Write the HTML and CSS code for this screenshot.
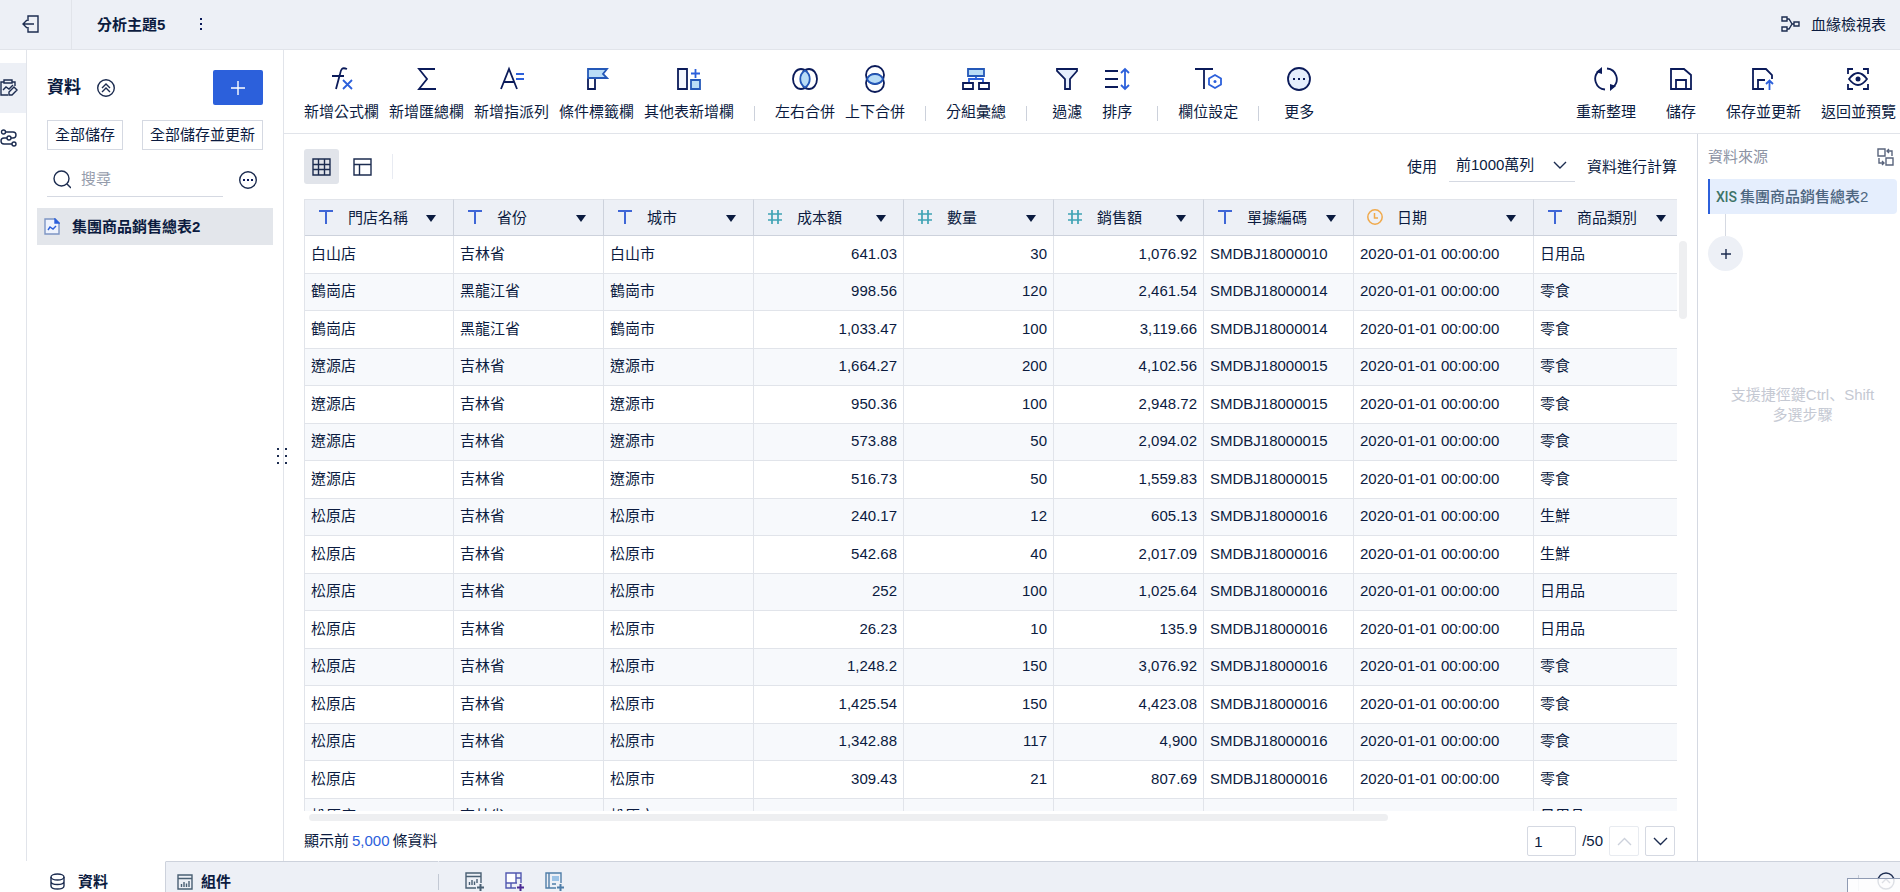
FILE: index.html
```html
<!DOCTYPE html>
<html lang="zh-Hant">
<head>
<meta charset="utf-8">
<title>分析主題5</title>
<link rel="stylesheet" href="styles.css">
</head>
<body>
<svg class="defs" aria-hidden="true">
  <symbol id="i-text" viewBox="0 0 16 16"><path d="M1 2h14M8 2v13" stroke="#3f66d6" stroke-width="2" fill="none"/></symbol>
  <symbol id="i-num" viewBox="0 0 16 16"><path d="M1 5h14M1 11h14M5 1v14M11 1v14" stroke="#3fa3b5" stroke-width="1.700" fill="none"/></symbol>
  <symbol id="i-clock" viewBox="0 0 16 16"><circle cx="8" cy="8" r="7.2" stroke="#f0a94b" stroke-width="1.5" fill="none"/><path d="M7.500 4v5H11" stroke="#f0a94b" stroke-width="1.5" fill="none"/></symbol>
  <symbol id="i-caret" viewBox="0 0 10 8"><path d="M0 1h10L5 8z" fill="#0b1b3f"/></symbol>
</svg>
<div class="app">
  <header class="topbar">
    <button class="exit" aria-label="退出"><svg width="18" height="18" viewBox="0 0 18 18"><path d="M6 6V1h10v16H6v-5M12 9H1M5 5L1 9l4 4"/></svg></button>
    <h1 class="title">分析主題5</h1>
    <button class="dots" aria-label="更多"><svg width="4" height="14" viewBox="0 0 4 14"><path class="solid" d="M1 1h2v2H1zM1 6h2v2H1zM1 11h2v2H1z"/></svg></button>
    <button class="lineage"><svg width="19" height="16" viewBox="0 0 19 16"><path d="M1 1h5v4H1zM1 11h5v4H1zM13 6h5v4h-5zM6 3h2l3 5-3 5H6M11 8h2"/></svg>血緣檢視表</button>
  </header>
  <div class="body">
    <nav class="rail">
      <button class="rail-item active" aria-label="資料編輯"><svg width="20" height="18" viewBox="0 0 20 18"><path d="M8 16H1V3h3M15 7V3h-3M4 1h8v3H4zM3 11l3-3 3 2 4-4M9 13l5-5 3 3-5 5H9z"/></svg></button>
      <button class="rail-item" aria-label="流程"><svg width="20" height="18" viewBox="0 0 20 18"><circle cx="3.500" cy="3" r="2"/><circle cx="9" cy="9" r="2"/><circle cx="14" cy="15" r="2"/><path d="M6 3h7a3 3 0 0 1 0 6h-2M7 9H4a3 3 0 0 0 0 6h8"/></svg></button>
    </nav>
    <aside class="side">
      <div class="side-head">
        <h2>資料</h2>
        <button aria-label="收合"><svg width="18" height="18" viewBox="0 0 18 18"><circle cx="9" cy="9" r="8.300"/><path d="M5 9l4-4 4 4M5 13l4-4 4 4"/></svg></button>
        <button class="add" aria-label="新增"><svg width="14" height="14" viewBox="0 0 14 14"><path d="M7 0v14M0 7h14"/></svg></button>
      </div>
      <div class="side-actions"><button>全部儲存</button><button>全部儲存並更新</button></div>
      <div class="side-search">
        <label class="search"><svg width="18" height="19" viewBox="0 0 18 19"><circle cx="8.500" cy="8.500" r="7.500"/><path d="M14 14l4 4"/></svg><input type="text" placeholder="搜尋" aria-label="搜尋"></label>
        <button aria-label="選項"><svg width="18" height="18" viewBox="0 0 18 18"><circle cx="9" cy="9" r="8.300"/><path class="solid" d="M4 8h2v2H4zM8 8h2v2H8zM12 8h2v2h-2z"/></svg></button>
      </div>
      <a class="side-item" href="#"><svg width="16" height="17" viewBox="0 0 16 17"><path class="page" d="M1 1h10l4 4v11H1z"/><path d="M11 1v4h4z" class="fold"/><path d="M4 12l2-3 3 2 3-3"/></svg>集團商品銷售總表2</a>
      <div class="grip"><i></i><i></i><i></i><i></i><i></i><i></i></div>
    </aside>
    <div class="work">
      <div class="tools">
        <button class="tool"><svg width="24" height="26" viewBox="0 0 24 26"><path d="M17 3c-5-2-6 0-7 5L6 23M2 10h12"/><path class="b" d="M13 14l9 9M22 14l-9 9"/></svg>新增公式欄</button>
        <button class="tool"><svg width="24" height="26" viewBox="0 0 24 26"><path d="M20 3H4l8 10-8 10h17"/></svg>新增匯總欄</button>
        <button class="tool"><svg width="24" height="26" viewBox="0 0 24 26"><path d="M1 23L9 3l8 20M4 16h10"/><path class="b" d="M16 8h8M16 13h8"/></svg>新增指派列</button>
        <button class="tool"><svg width="24" height="26" viewBox="0 0 24 26"><path d="M3 12v11h7V12"/><path class="bf" d="M3 3h19l-4 5 4 4H3z"/></svg>條件標籤欄</button>
        <button class="tool"><svg width="24" height="26" viewBox="0 0 24 26"><path d="M1 3h9v20H1z" fill="#f3f6fd"/><path class="bf" d="M14 14h9v9h-9z"/><path class="b" d="M18.500 3v9M14 7.500h9"/></svg>其他表新增欄</button>
        <span class="sep"></span>
        <button class="tool"><svg width="28" height="28" viewBox="0 0 28 28"><ellipse cx="10" cy="14" rx="8" ry="10"/><ellipse cx="18" cy="14" rx="8" ry="10"/><path class="bf" d="M14 5.500a10 10 0 0 1 0 17a10 10 0 0 1 0-17z"/></svg>左右合併</button>
        <button class="tool"><svg width="28" height="28" viewBox="0 0 28 28"><circle cx="14" cy="10" r="9"/><circle cx="14" cy="18" r="9"/><path class="bf" d="M6 14a9 9 0 0 1 16 0a9 9 0 0 1-16 0z"/></svg>上下合併</button>
        <span class="sep"></span>
        <button class="tool"><svg width="28" height="26" viewBox="0 0 28 26"><path class="b" d="M14 9v4M7 17v-4h14v4"/><path class="bf" d="M6 3h16v7H6z"/><path d="M1 17h10v6H1zM17 17h10v6H17z"/></svg>分組彙總</button>
        <span class="sep"></span>
        <button class="tool pair"><svg width="24" height="26" viewBox="0 0 24 26"><path fill="#e5eefd" d="M2 3h20v2l-7 8v10h-5V13L2 5z"/></svg>過濾</button>
        <button class="tool pair"><svg width="26" height="26" viewBox="0 0 26 26"><path d="M1 5h13M1 13h13M1 21h13"/><path class="b" d="M21 3v20M17 7l4-4 4 4M17 19l4 4 4-4"/></svg>排序</button>
        <span class="sep"></span>
        <button class="tool"><svg width="28" height="26" viewBox="0 0 28 26"><path d="M1 3h18M10 3v20"/><path class="b" fill="#fff" d="M21 9l6 3.500v6L21 22l-6-3.500v-6z"/><circle class="bd" cx="21" cy="15.500" r="1.500"/></svg>欄位設定</button>
        <span class="sep"></span>
        <button class="tool pair"><svg width="26" height="26" viewBox="0 0 26 26"><circle cx="13" cy="13" r="11" fill="#e5eefd"/><path class="solid" d="M7 12h2v2H7zM12 12h2v2h-2zM17 12h2v2h-2z"/></svg>更多</button>
        <div class="tools-end">
          <button class="tool"><svg width="26" height="26" viewBox="0 0 26 26"><path d="M12 23.500A10.500 10.500 0 0 1 6 5M14 2.500A10.500 10.500 0 0 1 20 21"/><path class="solid" d="M3 6l6-5v7zM17 18v7l6-5z"/></svg>重新整理</button>
          <button class="tool"><svg width="24" height="26" viewBox="0 0 24 26"><path d="M2 3h13l7 6v14H2zM7 23v-9h10v9"/></svg>儲存</button>
          <button class="tool"><svg width="24" height="26" viewBox="0 0 24 26"><path d="M13 23H2V3h13l6 6v4M7 23v-9h7"/><path class="b" d="M18.500 24v-9M15 18l3.500-3.500L22 18"/></svg>保存並更新</button>
          <button class="tool"><svg width="24" height="26" viewBox="0 0 24 26"><path d="M2 8V3h5M17 3h5v5M22 18v5h-5M7 23H2v-5M3 13q9-12 18 0q-9 12-18 0z"/><circle class="solid" cx="12" cy="13" r="2.500"/></svg>返回並預覽</button>
        </div>
      </div>
      <div class="lower">
        <main class="main">
          <div class="view">
            <button class="vbtn active" aria-label="表格"><svg width="19" height="18" viewBox="0 0 19 18"><path d="M1 1h17v16H1zM1 6.500h17M1 11.500h17M6.500 1v16M12.500 1v16"/></svg></button>
            <button class="vbtn" aria-label="版面"><svg width="19" height="18" viewBox="0 0 19 18"><path d="M1 1h17v16H1zM1 6.500h17M6.500 6.500v10.500"/></svg></button>
            <span class="vsep"></span>
            <div class="calc"><label for="rows">使用</label>
              <span class="pick"><select id="rows"><option>前1000萬列</option></select><svg width="14" height="9" viewBox="0 0 14 9"><path d="M1 1l6 6 6-6"/></svg></span>
              <span>資料進行計算</span></div>
          </div>
          <div class="grid-row">
            <div class="grid">
              <table>
                <colgroup><col class="c0"><col><col><col><col><col><col><col class="cd"><col></colgroup>
                <thead><tr id="head"></tr></thead>
                <tbody id="rowsBody"></tbody>
              </table>
            </div>
            <div class="vbar"></div>
          </div>
          <div class="hbar"></div>
          <div class="foot">
            <span>顯示前<b>5,000</b>條資料</span>
            <div class="pager"><input type="text" value="1" aria-label="頁碼"><span>/50</span>
              <button class="off" disabled aria-label="上一頁"><svg width="15" height="9" viewBox="0 0 15 9"><path d="M1 8l6.500-6.500L14 8"/></svg></button>
              <button aria-label="下一頁"><svg width="15" height="9" viewBox="0 0 15 9"><path d="M1 1l6.500 6.500L14 1"/></svg></button></div>
          </div>
        </main>
        <aside class="steps">
          <div class="steps-head"><span>資料來源</span><button aria-label="切換"><svg width="17" height="18" viewBox="0 0 17 18"><path d="M1 1h7v7H1zM9 10h7v7H9zM10 3h5v5M12 1l-2 2 2 2M7 15H2v-5M5 13l2 2-2 2"/></svg></button></div>
          <a class="step" href="#"><span class="xls">XlS</span>集團商品銷售總表2</a>
          <span class="link"></span>
          <button class="plus" aria-label="新增步驟"><svg width="10" height="10" viewBox="0 0 10 10"><path d="M5 0v10M0 5h10"/></svg></button>
          <p class="hint" lang="zh-Hans">支援捷徑鍵Ctrl、Shift<br>多選步驟</p>
        </aside>
      </div>
    </div>
  </div>
  <footer class="tabs">
    <button class="tab current"><svg width="15" height="17" viewBox="0 0 15 17"><ellipse cx="7.500" cy="4" rx="6.500" ry="3"/><path d="M1 4v9c0 4 13 4 13 0V4M1 8.500c0 4 13 4 13 0"/></svg>資料</button>
    <button class="tab"><svg class="muted" width="16" height="16" viewBox="0 0 16 16"><path d="M1 1h14v14H1zM1 4.500h14M4.500 10v3M7 8v5M9.500 9.500v3.500M12 7v6"/></svg>組件</button>
    <span class="tsep"></span>
    <div class="adds">
      <button aria-label="新增組件"><svg class="muted" width="19" height="19" viewBox="0 0 19 19"><path d="M11 16H1V1h15v10M1 4.500h15M4.500 10v3M7 8v5M9.500 9.500v3.500M12 7v4"/><path class="mark" d="M15.500 12v7M12 15.500h7"/></svg></button>
      <button aria-label="新增儀表板"><svg class="violet" width="19" height="19" viewBox="0 0 19 19"><path fill="#fff" stroke="none" d="M1 1h10v10H1z"/><path d="M11 16H1V1h15v10M1 11h11M11 1v10M11 6h5M6 11v5"/><path class="mark" d="M15.500 12v7M12 15.500h7"/></svg></button>
      <button aria-label="新增報告"><svg class="steel" width="19" height="19" viewBox="0 0 19 19"><path d="M11 16H1V1h15v10M4 1v15M7 12h4"/><path fill="#9cc3e6" stroke="none" d="M7 4h7v5H7z"/><path class="mark" d="M15.500 12v7M12 15.500h7"/></svg></button>
    </div>
    <div class="tabs-end"><span class="tsep"></span><svg width="18" height="18" viewBox="0 0 18 18"><circle cx="9" cy="9" r="8"/><path d="M5 11l4-4 4 4"/></svg></div>
    <div class="tip"></div>
  </footer>
</div>
<script src="table.js"></script>
</body>
</html>
```
FILE: table.js
```js
const heads = [['text', '門店名稱'], ['text', '省份'], ['text', '城市'], ['num', '成本額'], ['num', '數量'], ['num', '銷售額'], ['text', '單據編碼'], ['clock', '日期'], ['text', '商品類別']];
const rows = [
  ['白山', '吉林省', '641.03', '30', '1,076.92', '10', '日用品'],
  ['鶴崗', '黑龍江省', '998.56', '120', '2,461.54', '14', '零食'],
  ['鶴崗', '黑龍江省', '1,033.47', '100', '3,119.66', '14', '零食'],
  ['遼源', '吉林省', '1,664.27', '200', '4,102.56', '15', '零食'],
  ['遼源', '吉林省', '950.36', '100', '2,948.72', '15', '零食'],
  ['遼源', '吉林省', '573.88', '50', '2,094.02', '15', '零食'],
  ['遼源', '吉林省', '516.73', '50', '1,559.83', '15', '零食'],
  ['松原', '吉林省', '240.17', '12', '605.13', '16', '生鮮'],
  ['松原', '吉林省', '542.68', '40', '2,017.09', '16', '生鮮'],
  ['松原', '吉林省', '252', '100', '1,025.64', '16', '日用品'],
  ['松原', '吉林省', '26.23', '10', '135.9', '16', '日用品'],
  ['松原', '吉林省', '1,248.2', '150', '3,076.92', '16', '零食'],
  ['松原', '吉林省', '1,425.54', '150', '4,423.08', '16', '零食'],
  ['松原', '吉林省', '1,342.88', '117', '4,900', '16', '零食'],
  ['松原', '吉林省', '309.43', '21', '807.69', '16', '零食'],
  ['松原', '吉林省', '', '', '', '', '日用品']
];
document.getElementById('head').innerHTML = heads.map(([icon, name]) =>
  `<th scope="col"><div class="th"><svg class="kind" width="16" height="16"><use href="#i-${icon}"/></svg><span>${name}</span><svg class="caret" width="10" height="8"><use href="#i-caret"/></svg></div></th>`).join('');
document.getElementById('rowsBody').innerHTML = rows.map(([place, province, cost, count, sales, code, kind]) => {
  const cells = [place + '店', province, place + '市', cost, count, sales, code && 'SMDBJ180000' + code, code && '2020-01-01 00:00:00', kind];
  return '<tr>' + cells.map((c, i) => `<td${i > 2 && i < 6 ? ' class="n"' : ''}>${c}</td>`).join('') + '</tr>';
}).join('');
```
FILE: styles.css
```css
* { box-sizing: border-box; }
html, body { height: 100%; margin: 0; }
body { font: 15px/20px "Liberation Sans", "Noto Sans CJK TC", sans-serif; color: #0b1b3f; background: #fff; overflow: hidden; }
button, input, select { font: inherit; color: inherit; border: 0; background: none; padding: 0; margin: 0; }
button { display: flex; align-items: center; justify-content: center; white-space: nowrap; }
a { color: inherit; text-decoration: none; }
h1, h2, p { margin: 0; }
svg { flex: none; display: block; fill: none; stroke: #1c2c50; stroke-width: 1.4; }
.defs { position: absolute; width: 0; height: 0; }
svg .solid { fill: #0b1b5a; stroke: none; }
.app { height: 100vh; display: flex; flex-direction: column; }
.topbar { height: 50px; flex: none; display: flex; align-items: center; background: #edf0f6; border-bottom: 1px solid #e1e4ea; padding-right: 14px; }
.exit { width: 72px; height: 49px; border-right: 1px solid #e1e4ea; padding: 0 9px 2px 0; }
.title { font-size: 15px; font-weight: 700; padding-left: 25px; }
.dots { margin-left: 34px; padding-bottom: 2px; }
.lineage { margin-left: auto; gap: 11px; }
.lineage svg { margin-bottom: 2px; }
.body { flex: 1; min-height: 0; display: flex; }
.rail { width: 27px; border-right: 1px solid #e1e4ea; padding-top: 13px; overflow: hidden; }
.rail-item { width: 26px; height: 50px; justify-content: flex-start; }
.rail-item.active { background: #edf0f6; }
.side { position: relative; width: 257px; border-right: 1px solid #e1e4ea; padding: 20px 10px 0; }
.side-head { display: flex; align-items: center; height: 35px; padding: 0 10px; gap: 16px; }
.side-head h2 { font-size: 17px; font-weight: 700; }
.add { width: 50px; height: 35px; margin-left: auto; border-radius: 2px; background: #2c60db; }
.add svg { stroke: #fff; }
.side-actions { display: flex; justify-content: space-between; padding: 0 10px; margin-top: 15px; }
.side-actions button { height: 30px; border: 1px solid #d5d9e2; padding: 0 7px; }
.side-search { display: flex; justify-content: space-between; align-items: center; padding: 0 16px 0 10px; margin-top: 12px; height: 35px; }
.search { display: flex; align-items: center; gap: 10px; width: 176px; height: 35px; border-bottom: 1px solid #d5d9e2; padding-left: 6px; }
.search input { min-width: 0; flex: 1; outline: 0; }
.search input::placeholder { color: #959cab; }
.side-item { display: flex; align-items: center; gap: 12px; height: 37px; margin-top: 11px; padding-left: 7px; background: #e3e6eb; font-weight: 700; white-space: nowrap; }
.side-item svg { stroke: #2c60db; }
.side-item .page { fill: #eef3fd; stroke: #7d95c4; }
.side-item .fold { fill: #2c60db; }
.grip { position: absolute; right: -4px; top: 398px; display: grid; grid-template-columns: 2px 2px; gap: 5px 6px; }
.grip i { width: 2px; height: 2px; background: #1c2c50; }
.work { flex: 1; min-width: 0; display: flex; flex-direction: column; }
.tools { height: 84px; flex: none; display: flex; align-items: flex-start; gap: 10px; padding: 15px 4px 0 20px; border-bottom: 1px solid #e1e4ea; }
.tool { flex-direction: column; height: 57px; justify-content: space-between; }
.tool svg { stroke: #0b1b5a; stroke-width: 1.8; height: 28px; }
svg .b { stroke: #2c60db; }
svg .bf { stroke: #2458b8; fill: #b9dcf6; }
svg .bd { fill: #2c60db; stroke: none; }
.sep { width: 1px; height: 15px; background: #ccd1db; margin: 41px 10px 0; }
.pair { margin: 0 5px; }
.tools-end { margin-left: auto; display: flex; gap: 20px; }
.tools-end .tool:nth-child(2) { margin: 0 10px; }
.lower { flex: 1; min-height: 0; display: flex; }
.main { flex: 1; min-width: 0; display: flex; flex-direction: column; padding: 15px 10px 0 20px; }
.view { display: flex; align-items: center; height: 35px; flex: none; padding-right: 10px; }
.vbtn { width: 35px; height: 35px; border-radius: 3px; margin-right: 6px; }
.vbtn.active { background: #e1e4ea; }
.vsep { width: 1px; height: 25px; background: #e8ebf2; margin-left: 6px; }
.calc { display: flex; align-items: center; gap: 12px; margin-left: auto; }
.pick { position: relative; width: 126px; height: 30px; border-bottom: 1px solid #d5d9e2; }
.pick select { appearance: none; width: 100%; height: 26px; padding-left: 7px; }
.pick svg { position: absolute; right: 8px; top: 9px; pointer-events: none; }
.grid-row { flex: 1; min-height: 0; display: flex; margin-top: 15px; gap: 2px; }
.grid { flex: 1; min-width: 0; overflow: hidden; }
table { table-layout: fixed; width: 1380px; border-collapse: separate; border-spacing: 0; border-left: 1px solid #e1e4ea; }
col { width: 150px; }
col.c0 { width: 149px; }
col.cd { width: 180px; }
th { height: 37px; padding: 0; background: #edf0f6; font-weight: 400; border: solid #cdd2dc; border-width: 1px 1px 1px 0; border-top-color: #e1e4ea; }
.th { display: flex; align-items: center; padding: 0 17px 0 13px; }
.th span { margin-left: 14px; }
.kind { margin-bottom: 2px; }
.caret { margin-left: auto; stroke: none; }
td { height: 38px; padding: 0 6px 2px; border: solid #e1e4ea; border-width: 0 1px 1px 0; white-space: nowrap; line-height: 18px; }
tr:nth-child(even) td { height: 37px; background: #f7f9fc; }
td.n { text-align: right; }
.vbar { width: 8px; height: 78px; margin-top: 42px; border-radius: 4px; background: #eeeff1; }
.hbar { flex: none; width: 78%; height: 7px; margin: 3px 0 0 5px; border-radius: 4px; background: #eeeff1; }
.foot { flex: none; display: flex; align-items: center; justify-content: space-between; padding: 5px 12px 5px 0; }
.foot b { font-weight: 400; color: #2c60db; margin: 0 3px; }
.pager { display: flex; align-items: center; gap: 6px; }
.pager input { width: 49px; height: 30px; border: 1px solid #d5d9e2; border-radius: 2px; padding-left: 6px; }
.pager button { width: 30px; height: 30px; border: 1px solid #d5d9e2; border-radius: 2px; }
.pager .off { border-color: #e8ebf0; }
.pager .off svg { stroke: #ccd1db; }
.steps { width: 203px; flex: none; border-left: 1px solid #d5d9e2; padding: 13px 3px 0 10px; }
.steps-head { display: flex; align-items: center; justify-content: space-between; height: 20px; padding-right: 3px; color: #8b92a3; }
.steps-head svg { stroke: #59647c; }
.step { display: flex; align-items: center; gap: 7px; height: 35px; margin-top: 12px; padding-left: 6px; border-left: 2px solid #2c60db; border-radius: 0 4px 4px 0; background: #e5eefd; color: #4d6680; font-weight: 500; white-space: nowrap; }
.xls { font: 500 14px/20px Roboto, sans-serif; color: #3e7468; width: 18px; margin-right: -1px; }
.link { display: block; width: 1px; height: 22px; margin-left: 17px; background: #d5d9e2; }
.plus { width: 35px; height: 35px; border-radius: 50%; background: #edf0f6; }
.hint { margin-top: 114px; text-align: center; color: #c5c9d3; font-family: "Liberation Sans", "Noto Sans CJK SC", sans-serif; }
.tabs { position: relative; flex: none; height: 31px; display: flex; background: #edf0f6; overflow: hidden; }
.tab { gap: 8px; height: 40px; padding-left: 11px; border-top: 1px solid #cdd2dc; font-weight: 700; flex: none; width: 272px; justify-content: flex-start; }
.tab.current { width: 166px; gap: 13px; padding-left: 50px; background: #fff; border-top-color: #fff; border-right: 1px solid #cdd2dc; }
svg.muted { stroke: #4a6074; }
svg.violet { stroke: #5158b0; }
svg.steel { stroke: #4f7da8; }
.mark { stroke-width: 2; }
.violet .mark { stroke: #4b2a94; }
.tabs .tsep { width: 1px; height: 16px; margin-top: 13px; background: #c3c9d4; }
.adds { display: flex; gap: 21px; padding: 10px 0 0 26px; align-items: flex-start; }
.adds, .tabs-end { flex: none; border-top: 1px solid #cdd2dc; }
.tabs-end { flex: 1; display: flex; justify-content: flex-end; gap: 18px; padding-right: 5px; }
.tabs-end svg { margin-top: 10px; }
.tip { position: absolute; right: -4px; bottom: -4px; width: 57px; height: 18px; border: 1px solid #8f9bb3; background: rgba(255, 255, 255, .85); }
```
